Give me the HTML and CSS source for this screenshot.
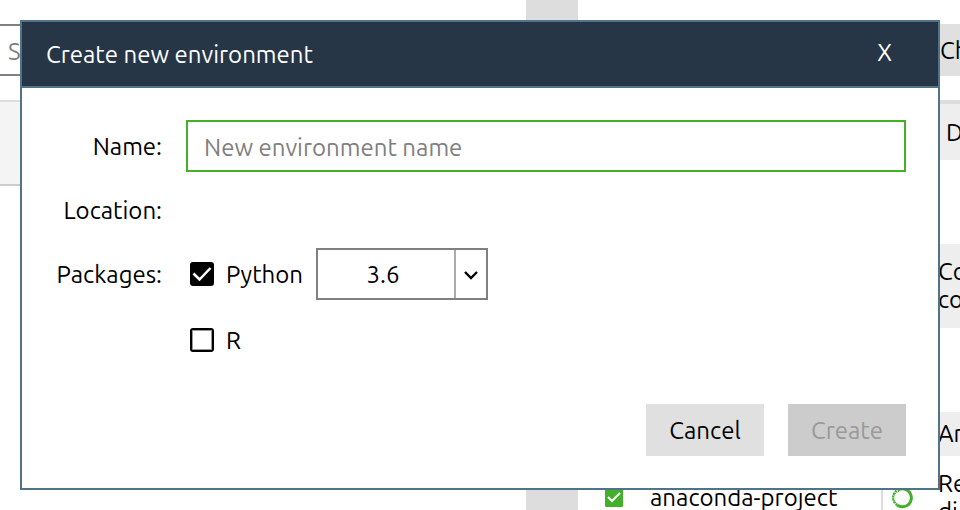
FILE: index.html
```html
<!DOCTYPE html>
<html lang="en">
<head>
<meta charset="utf-8">
<meta name="viewport" content="width=device-width, initial-scale=1">
<title>Create new environment</title>
<link rel="stylesheet" href="styles.css">
</head>
<body>
<div class="workspace">
  <section class="environments">
    <input class="search" type="search" placeholder="S" aria-label="S">
    <div class="environment"></div>
  </section>
  <div class="divider"></div>
  <section class="packages">
    <div class="toolbar"><button class="channels" type="button">Ch</button></div>
    <table class="list">
      <colgroup><col class="col-check"><col class="col-name"><col class="col-type"><col></colgroup>
      <thead><tr><th></th><th></th><th></th><th>D</th></tr></thead>
      <tbody>
        <tr class="tall"><td></td><td></td><td></td><td></td></tr>
        <tr class="tall shaded"><td></td><td></td><td></td><td>Co<br>co</td></tr>
        <tr class="tall"><td></td><td></td><td></td><td></td></tr>
        <tr class="shaded"><td></td><td></td><td></td><td>Ar</td></tr>
        <tr class="tall">
          <td class="check"><svg width="18" height="18" viewBox="0 0 18 18"><rect width="18" height="18" rx="1" fill="#43b02a"/><path d="M3 8l4 4 8-8" fill="none" stroke="#fff" stroke-width="2"/></svg></td>
          <td class="name">anaconda-project</td>
          <td class="type"><svg width="22" height="22" viewBox="0 0 22 22" fill="none" stroke="#43b02a"><path d="M7 3a9 9 0 1 1-1 15" stroke-width="3"/><path d="M8 2a9 9 0 0 0-2 16" stroke-width="2" stroke-dasharray="2 1"/><path d="M8 4a7 7 0 0 0-2 13" stroke-width="2" stroke-dasharray="1 1"/></svg></td>
          <td>Re<br>di</td>
        </tr>
      </tbody>
    </table>
  </section>
</div>

<form class="dialog" role="dialog" aria-labelledby="title">
  <header class="titlebar">
    <h1 id="title">Create new environment</h1>
    <button class="close" type="button">X</button>
  </header>
  <div class="content">
    <div class="fields">
      <label class="caption" for="name">Name:</label>
      <input class="text" id="name" type="text" placeholder="New environment name">
      <span class="caption">Location:</span>
      <output></output>
      <span class="caption">Packages:</span>
      <div class="choices">
        <div class="choice">
          <span class="box"><input id="python" type="checkbox" checked><svg viewBox="0 0 24 24"><path d="M3.5 11.5l6 6L20.500 6"/></svg></span>
          <label for="python">Python</label>
          <span class="version">
            <select aria-label="Python"><option>3.6</option></select>
            <svg viewBox="0 0 30 48"><path d="M9 22l6 6 6-6"/></svg>
          </span>
        </div>
        <div class="choice">
          <span class="box"><input id="r" type="checkbox"><svg viewBox="0 0 24 24"><path d="M3.5 11.5l6 6L20.500 6"/></svg></span>
          <label for="r">R</label>
        </div>
      </div>
    </div>
    <footer class="actions">
      <button class="button" type="button">Cancel</button>
      <button class="button" type="submit" disabled>Create</button>
    </footer>
  </div>
</form>
</body>
</html>
```
FILE: styles.css
```css
* {
  box-sizing: border-box;
}

body {
  margin: 0;
  height: 100vh;
  overflow: hidden;
  position: relative;
  background: #fff;
  color: #000;
  font: 24px/28px Ubuntu, "Noto Sans", sans-serif;
}

button, input, select {
  font: inherit;
  color: inherit;
  border-radius: 0;
  margin: 0;
}

svg {
  display: block;
}

/* Main window behind the dialog */
.workspace {
  display: grid;
  grid-template-columns: minmax(0, 526fr) 52px minmax(0, 382fr);
  height: 100%;
  overflow: hidden;
}

.environments {
  padding-top: 24px;
}

.search {
  display: block;
  width: 100%;
  height: 52px;
  padding: 2px 8px 0;
  border: 2px solid #808080;
  border-left: 0;
  outline: 0;
  background: #fff;
}

.search::placeholder {
  color: #808080;
  opacity: 1;
}

.environment {
  height: 86px;
  margin-top: 24px;
  background: #f4f4f4;
  border-top: 2px solid #ddd;
  border-bottom: 2px solid #ccc;
}

.divider {
  background: #ddd;
}

.packages {
  padding-top: 24px;
}

.toolbar {
  display: flex;
  justify-content: flex-end;
  margin-bottom: 24px;
}

.channels {
  width: 42px;
  height: 52px;
  padding: 2px 0 0 22px;
  border: 0;
  background: #e0e0e0;
  overflow: hidden;
  text-align: left;
}

.list {
  width: 100%;
  table-layout: fixed;
  border-spacing: 0;
}

.col-check {
  width: 72px;
}

.col-name {
  width: 231px;
}

.col-type {
  width: 57px;
}

.list th {
  height: 60px;
  padding: 2px 0 0 8px;
  border-top: 4px solid #ddd;
  background: #eee;
  font-weight: 400;
  text-align: left;
}

.list td {
  height: 44px;
  padding: 0;
  white-space: nowrap;
}

.list .tall td {
  height: 84px;
}

.shaded td {
  background: #eee;
}

.list .check {
  padding-left: 27px;
}

.list .type {
  padding-left: 8px;
  border-left: 2px solid #ddd;
}

/* Dialog */
.dialog {
  position: absolute;
  top: 20px;
  left: 20px;
  right: 20px;
  background: #fff;
  border: 2px solid #4f7387;
}

.titlebar {
  display: flex;
  align-items: center;
  justify-content: space-between;
  height: 66px;
  padding: 0 46px 0 24px;
  background: #263646;
  border-bottom: 2px solid #4f7387;
  color: #fff;
}

.titlebar h1 {
  margin: 0;
  padding-top: 2px;
  font: inherit;
}

.close {
  padding: 0 0 2px;
  border: 0;
  background: none;
}

.content {
  padding: 32px;
}

.fields {
  display: grid;
  grid-template-columns: 108px 1fr;
  grid-auto-rows: minmax(52px, auto);
  gap: 12px 24px;
}

.caption {
  height: 52px;
  line-height: 54px;
  text-align: right;
}

.text {
  width: 100%;
  height: 52px;
  padding: 2px 16px 0;
  border: 2px solid #43b02a;
  outline: 0;
}

.text::placeholder {
  color: #808080;
  opacity: 1;
}

.choices {
  display: grid;
  gap: 14px;
}

.choice {
  display: flex;
  align-items: center;
  height: 52px;
  padding-left: 4px;
}

.choice label {
  width: 90px;
  margin-left: 12px;
  padding-top: 2px;
}

.box {
  position: relative;
  width: 24px;
  height: 24px;
}

.box input {
  display: block;
  appearance: none;
  width: 24px;
  height: 24px;
  border: 2px solid #000;
  border-radius: 3px;
  background: #fff;
  box-shadow: inset 0 0 0 1px #999;
}

.box input:checked {
  background: #000;
  box-shadow: none;
}

.box svg {
  position: absolute;
  inset: 0;
  display: none;
  pointer-events: none;
  fill: none;
  stroke: #fff;
  stroke-width: 2.5;
}

.box input:checked + svg {
  display: block;
}

.version {
  position: relative;
  width: 172px;
}

.version select {
  display: block;
  appearance: none;
  width: 100%;
  height: 52px;
  padding: 2px 38px 0 0;
  border: 2px solid #808080;
  background: #fff;
  text-align: center;
  text-align-last: center;
}

.version svg {
  position: absolute;
  top: 2px;
  right: 2px;
  width: 32px;
  height: 48px;
  border-left: 2px solid #aaa;
  pointer-events: none;
  fill: none;
  stroke: #000;
  stroke-width: 2.4;
}

.actions {
  display: flex;
  justify-content: flex-end;
  gap: 24px;
  margin-top: 38px;
}

.button {
  width: 118px;
  height: 52px;
  padding: 2px 0 0;
  border: 0;
  background: #e0e0e0;
}

.button:disabled {
  background: #ccc;
  color: #999;
}
```
